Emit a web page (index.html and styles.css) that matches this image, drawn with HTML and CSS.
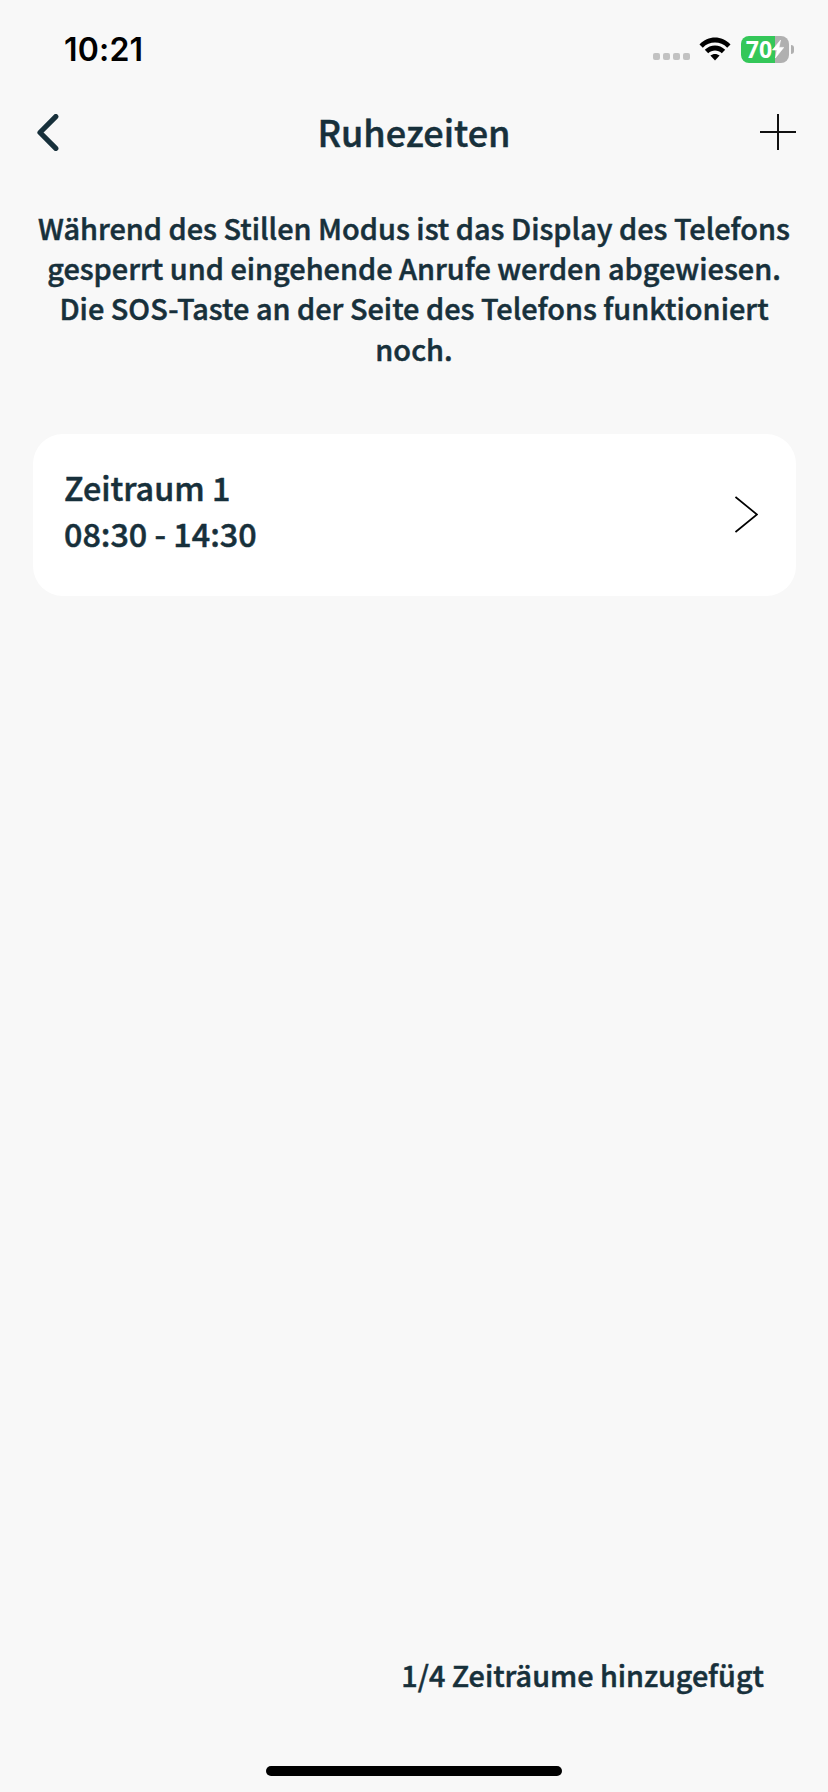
FILE: index.html
```
<!DOCTYPE html>
<html lang="de">
<head>
    <meta charset="UTF-8">
    <meta name="viewport" content="width=device-width, initial-scale=1.0">
    <title>Ruhezeiten</title>
    <link rel="stylesheet" href="styles.css">
</head>
<body>

    <div class="screen">
        <div class="status-bar">
            <span class="time">10:21</span>
            <div class="status-icons">
                <div class="signal"><i></i><i></i><i></i><i></i></div>
                <svg class="wifi" width="32" height="24" viewBox="0 0 32 24">
                    <path d="M0.5 7.4C9 -1.8 23 -1.8 31.5 7.4L28.2 10.7C21.4 3.9 10.6 3.9 3.8 10.7Z"/>
                    <path d="M5.8 12.8C11.6 7 20.4 7 26.2 12.8L22.8 16.2C18.9 12.5 13.1 12.5 9.2 16.2Z"/>
                    <path d="M11.4 18.6C14 16.4 18 16.4 20.6 18.6L16 23.6Z"/>
                </svg>
                <div class="battery">
                    <div class="battery-body">
                        <span>70</span>
                        <svg width="12" height="18" viewBox="0 0 12 18">
                            <path d="M8.6 0L0.4 10H5L3.4 18L11.8 7.4H7Z" fill="#fff" stroke="#fff" stroke-width="0.6"/>
                        </svg>
                    </div>
                    <div class="battery-cap"></div>
                </div>
            </div>
        </div>

        <header class="nav">
            <svg class="back" width="22" height="37" viewBox="0 0 22 37">
                <path d="M18.8 2.6L3 18.5L18.8 34.4" fill="none" stroke="#17303b" stroke-width="5.2" stroke-linecap="round" stroke-linejoin="round"/>
            </svg>
            <h1>Ruhezeiten</h1>
            <svg class="add" width="36" height="36" viewBox="0 0 36 36">
                <path d="M18 0V36M0 18H36" fill="none" stroke="#111" stroke-width="2"/>
            </svg>
        </header>

        <p class="info">
            Während des Stillen Modus ist das Display des Telefons<br>
            gesperrt und eingehende Anrufe werden abgewiesen.<br>
            Die SOS-Taste an der Seite des Telefons funktioniert<br>
            noch.
        </p>

        <div class="card">
            <div class="period">
                <div class="period-name">Zeitraum 1</div>
                <div class="period-time">08:30 - 14:30</div>
            </div>
            <svg width="23" height="37" viewBox="0 0 23 37">
                <path d="M0.5 1L22 18.5L0.5 36" fill="none" stroke="#000" stroke-width="1.7"/>
            </svg>
        </div>

        <div class="count">1/4 Zeiträume hinzugefügt</div>
        <div class="home-indicator"></div>
    </div>

</body>
</html>
```
FILE: styles.css
```
* {
    margin: 0;
    padding: 0;
    box-sizing: border-box;
}

body {
    font-family: 'Noto Sans CJK SC', 'Noto Sans', sans-serif;
    font-weight: 500;
    background-color: #f8f8f8;
    color: #17303b;
    -webkit-text-stroke: 0.5px currentColor;
}

svg {
    display: block;
    flex: none;
}

.screen {
    width: 828px;
    height: 1792px;
    display: flex;
    flex-direction: column;
    overflow: hidden;
}

/* status bar */
.status-bar {
    height: 100px;
    padding: 0 34px 2px 64px;
    display: flex;
    justify-content: space-between;
    align-items: center;
    -webkit-text-stroke: 0;
}

.time {
    font-family: Inter, sans-serif;
    font-size: 32px;
    font-weight: 600;
    letter-spacing: 0.2px;
    color: #000;
}

.status-icons {
    display: flex;
    align-items: center;
}

.signal {
    display: flex;
    gap: 3px;
    margin: 15px 9px 0 0;
}

.signal i {
    width: 7px;
    height: 7px;
    border-radius: 2px;
    background-color: #c2c2c2;
}

.battery {
    display: flex;
    align-items: center;
    margin-left: 10px;
}

.battery-body {
    width: 48px;
    height: 27px;
    border-radius: 8px;
    background: linear-gradient(to right, #34c759 34px, #b0b0b0 34px);
    display: flex;
    align-items: center;
    justify-content: center;
}

.battery-body span {
    font-family: 'Open Sans', sans-serif;
    font-size: 23px;
    font-weight: 700;
    line-height: 27px;
    color: #fff;
}

.battery-cap {
    width: 3px;
    height: 9px;
    margin-left: 2px;
    border-radius: 0 3px 3px 0;
    background-color: #b0b0b0;
}

/* header */
.nav {
    height: 64px;
    padding: 0 32px;
    display: grid;
    grid-template-columns: 1fr auto 1fr;
    align-items: center;
}

.back {
    margin-left: 5px;
}

.add {
    justify-self: end;
}

h1 {
    font-size: 36px;
    font-weight: 500;
    line-height: 62px;
    margin-bottom: 2px;
}

.info {
    margin-top: 43px;
    font-size: 28.9px;
    line-height: 40.2px;
    text-align: center;
    white-space: nowrap;
}

.card {
    margin: 66px 32px 0 33px;
    height: 162px;
    padding: 0 38px 0 31px;
    border-radius: 30px;
    background-color: #fff;
    display: flex;
    justify-content: space-between;
    align-items: center;
}

.period {
    font-size: 32.3px;
    line-height: 46px;
    margin-top: -9px;
}

/* footer */
.count {
    margin: auto 64px 0 0;
    font-size: 28.8px;
    line-height: 40px;
    text-align: right;
}

.home-indicator {
    width: 296px;
    height: 10px;
    margin: 71px auto 16px;
    border-radius: 5px;
    background-color: #000;
}
```
